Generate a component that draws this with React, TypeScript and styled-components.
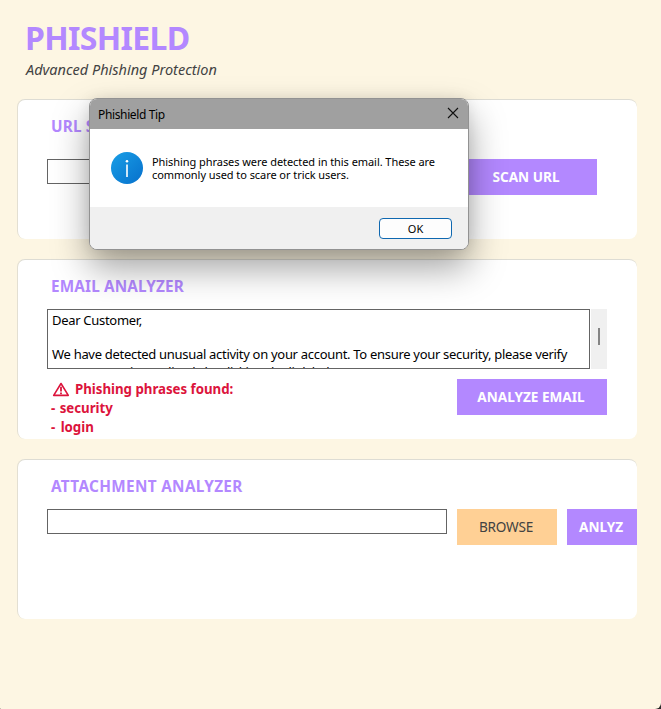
import React from "react";
import styled, { createGlobalStyle } from "styled-components";

const Global = createGlobalStyle`
  * { box-sizing: border-box; }
  body { margin: 0; background: #2a2a28; font-family: "Noto Sans", "Open Sans", sans-serif; overflow: hidden; }
`;
const Page = styled.main`
  position: relative;
  height: 709px;
  padding: 17px 24px 0 17px;
  overflow: hidden;
  background: #fdf6e3;
  border-radius: 0 0 6px 1px;
`;
const Title = styled.h1`
  margin: 0 0 0 8px;
  height: 42px;
  font-size: 32px;
  line-height: 42px;
  font-weight: 700;
  letter-spacing: -0.68px;
  color: #b388ff;
  white-space: nowrap;
`;
const Subtitle = styled.p`
  margin: 0 0 20px 9px;
  height: 20px;
  font-size: 14.5px;
  line-height: 20px;
  font-style: italic;
  color: #424242;
  white-space: nowrap;
`;
const Card = styled.section<{ $height: number }>`
  height: ${(p) => p.$height}px;
  margin-bottom: 20px;
  padding: 14px 0 0 29px;
  background: #fff;
  border-top: 1px solid #dddcd4;
  border-left: 1px solid #e3dfd2;
  border-radius: 8px;
  overflow: hidden;
`;
const Heading = styled.h2<{ $gap: number; $spacing?: number }>`
  margin: 0 0 ${(p) => p.$gap}px 4px;
  height: 22px;
  font-size: 15.3px;
  line-height: 24px;
  font-weight: 700;
  letter-spacing: ${(p) => p.$spacing ?? 0.15}px;
  color: #b388ff;
  white-space: nowrap;
`;
const Row = styled.div`
  display: flex;
  align-items: flex-start;
  gap: 10px;
`;
const Field = styled.div`
  width: 400px;
  height: 25px;
  border: 1px solid #646464;
  background: #fff;
  flex: none;
`;
const Button = styled.button<{ $width: number; $plain?: boolean }>`
  flex: none;
  width: ${(p) => p.$width}px;
  height: 36px;
  padding: 0 2px 0 0;
  border: 0;
  background: ${(p) => (p.$plain ? "#ffd095" : "#b388ff")};
  color: ${(p) => (p.$plain ? "#424242" : "#fff")};
  font: ${(p) => (p.$plain ? 400 : 700)} 13.6px/36px "Noto Sans", sans-serif;
  letter-spacing: ${(p) => (p.$plain ? -0.25 : 0)}px;
`;
const Editor = styled.div`
  display: flex;
  gap: 1px;
  margin-bottom: 10px;
`;
const TextArea = styled.div`
  width: 543px;
  height: 60px;
  padding: 2px 4px 0;
  border: 1px solid #646464;
  overflow: hidden;
  font-size: 13px;
  line-height: 17px;
  letter-spacing: -0.3px;
  color: #000;
  white-space: pre;
`;
const LastLine = styled.div`
  padding-top: 1px;
  letter-spacing: -0.38px;
`;
const ScrollBar = styled.div`
  display: flex;
  align-items: center;
  justify-content: center;
  width: 16px;
  height: 60px;
  padding-bottom: 5px;
  background: #f0f0f0;
`;
const Thumb = styled.div`
  width: 2px;
  height: 17px;
  background: #858585;
`;
const Findings = styled.div`
  width: 400px;
  padding: 1px 0 0 4px;
  color: #dc143c;
  font-size: 13.3px;
  line-height: 19px;
  font-weight: 700;
  white-space: nowrap;
`;
const Finding = styled.div<{ $wordGap?: number }>`
  display: flex;
  align-items: center;
  height: 19px;
  letter-spacing: -0.03px;
  word-spacing: ${(p) => p.$wordGap ?? 0}px;
`;
const WarnIcon = styled.svg`
  width: 18px;
  height: 15px;
  margin: 0 5px 0 1px;
`;
const Dialog = styled.div`
  position: absolute;
  left: 89px;
  top: 98px;
  width: 380px;
  height: 152px;
  border: 1px solid #929292;
  border-radius: 8px;
  overflow: hidden;
  background: #fff;
  color: #000;
  box-shadow: 0 18px 36px rgba(0, 0, 0, 0.37), 0 0 14px rgba(0, 0, 0, 0.08);
`;
const DialogBar = styled.div`
  display: flex;
  align-items: center;
  justify-content: space-between;
  height: 30px;
  padding: 0 9px 0 8px;
  background: #a0a0a0;
  font-size: 12px;
  letter-spacing: -0.36px;
`;
const CloseIcon = styled.svg`
  width: 12px;
  height: 12px;
  margin-bottom: 2px;
`;
const DialogBody = styled.div`
  display: flex;
  align-items: center;
  gap: 9px;
  height: 78px;
  padding-left: 21px;
  font-size: 11px;
  line-height: 13px;
  letter-spacing: -0.06px;
  white-space: pre;
`;
const InfoIcon = styled.svg`
  width: 32px;
  height: 32px;
`;
const DialogFooter = styled.div`
  display: flex;
  justify-content: flex-end;
  height: 42px;
  padding: 11px 16px 0 0;
  background: #f0f0f0;
`;
const OkButton = styled.button`
  width: 73px;
  height: 21px;
  padding: 0;
  border: 1px solid #0f68b0;
  border-radius: 4px;
  background: #fdfdfd;
  color: #000;
  font: 11px/19px "Noto Sans", sans-serif;
`;

export default function App() {
  return (
    <Page>
      <Global />
      <Title>PHISHIELD</Title>
      <Subtitle>Advanced Phishing Protection</Subtitle>
      <Card $height={140}>
        <Heading $gap={23}>URL SCANNER</Heading>
        <Row>
          <Field />
          <Button $width={140}>SCAN URL</Button>
        </Row>
      </Card>
      <Card $height={180}>
        <Heading $gap={13}>EMAIL ANALYZER</Heading>
        <Editor>
          <TextArea>
            <div>Dear Customer,</div>
            <div>&nbsp;</div>
            <div>We have detected unusual activity on your account. To ensure your security, please verify</div>
            <LastLine>your account immediately by clicking the link below:</LastLine>
          </TextArea>
          <ScrollBar><Thumb /></ScrollBar>
        </Editor>
        <Row>
          <Findings>
            <Finding>
              <WarnIcon viewBox="0 0 18 15" fill="none" stroke="#dc143c">
                <path d="M9 1.5 L16.3 13.4 H1.7 Z" strokeWidth="1.6" strokeLinejoin="round" />
                <path d="M9 4.8 V9.4 M9 10.4 V12.2" strokeWidth="1.8" />
              </WarnIcon>
              Phishing phrases found:
            </Finding>
            <Finding $wordGap={1}>- security</Finding>
            <Finding $wordGap={2}>- login</Finding>
          </Findings>
          <Button $width={150}>ANALYZE EMAIL</Button>
        </Row>
      </Card>
      <Card $height={160}>
        <Heading $gap={13} $spacing={0.34}>ATTACHMENT ANALYZER</Heading>
        <Row>
          <Field />
          <Button $width={100} $plain>BROWSE</Button>
          <Button $width={70}>ANLYZ</Button>
        </Row>
      </Card>
      <Dialog role="dialog">
        <DialogBar>
          Phishield Tip
          <CloseIcon viewBox="0 0 12 12" stroke="#111" strokeWidth="1.1">
            <path d="M1 1 L11 11 M11 1 L1 11" />
          </CloseIcon>
        </DialogBar>
        <DialogBody>
          <InfoIcon viewBox="0 0 32 32">
            <defs>
              <linearGradient id="info" x1="0" y1="0" x2="1" y2="1">
                <stop offset="0" stopColor="#1a9fe6" />
                <stop offset="1" stopColor="#0670cc" />
              </linearGradient>
            </defs>
            <circle cx="16" cy="16" r="16" fill="url(#info)" />
            <circle cx="16" cy="9.2" r="1.3" fill="#fff" />
            <rect x="15.2" y="12.5" width="1.6" height="12.5" fill="#fff" />
          </InfoIcon>
          <div>
            <div>Phishing phrases were detected in this email. These are</div>
            <div>commonly used to scare or trick users.</div>
          </div>
        </DialogBody>
        <DialogFooter><OkButton>OK</OkButton></DialogFooter>
      </Dialog>
    </Page>
  );
}
